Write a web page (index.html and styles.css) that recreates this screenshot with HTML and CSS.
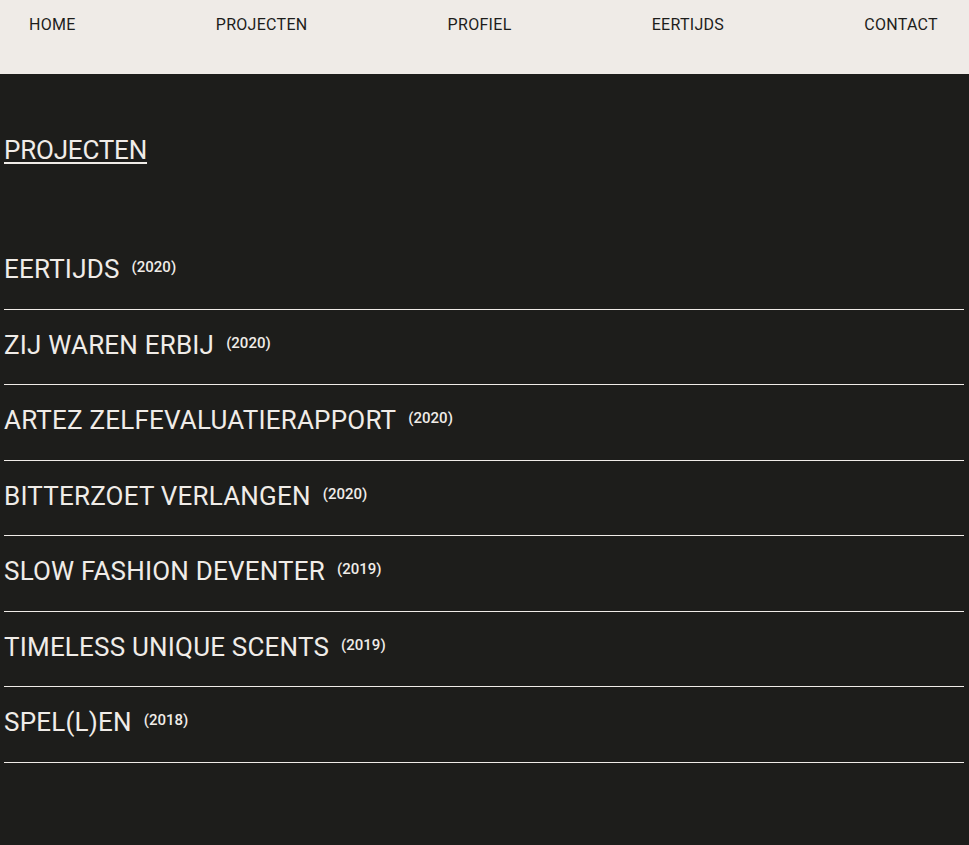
FILE: index.html
```html
<!DOCTYPE html>
<html lang="nl">
<head>
<meta charset="utf-8">
<title>Projecten</title>
<link rel="stylesheet" href="styles.css">
</head>
<body>
<header class="site-header">
  <nav class="nav">
    <a href="#">HOME</a>
    <a href="#">PROJECTEN</a>
    <a href="#">PROFIEL</a>
    <a href="#">EERTIJDS</a>
    <a href="#">CONTACT</a>
  </nav>
</header>
<main class="content">
  <h1 class="page-title"><a href="#">PROJECTEN</a></h1>
  <ul class="projects">
    <li class="project"><span class="name">EERTIJDS</span><span class="year">(2020)</span></li>
    <li class="project"><span class="name">ZIJ WAREN ERBIJ</span><span class="year">(2020)</span></li>
    <li class="project"><span class="name">ARTEZ ZELFEVALUATIERAPPORT</span><span class="year">(2020)</span></li>
    <li class="project"><span class="name">BITTERZOET VERLANGEN</span><span class="year">(2020)</span></li>
    <li class="project"><span class="name">SLOW FASHION DEVENTER</span><span class="year">(2019)</span></li>
    <li class="project"><span class="name">TIMELESS UNIQUE SCENTS</span><span class="year">(2019)</span></li>
    <li class="project"><span class="name">SPEL(L)EN</span><span class="year">(2018)</span></li>
  </ul>
</main>
</body>
</html>
```
FILE: styles.css
```css
html, body {
  margin: 0;
  padding: 0;
}
body {
  background: #1d1d1b;
  color: #f0ece8;
  font-family: Roboto, "Liberation Sans", sans-serif;
  min-height: 845px;
}
a {
  color: inherit;
  text-decoration: none;
}
.site-header {
  background: #efebe7;
  height: 74px;
}
.nav {
  display: flex;
  justify-content: space-between;
  padding: 15px 31px 0 29px;
  font-size: 16px;
  line-height: 20px;
  letter-spacing: 0.3px;
  color: #1d1d1b;
}
.content {
  padding: 0 5px 0 4px;
}
.page-title {
  margin: 0;
  padding-top: 61px;
  font-size: 26px;
  font-weight: 400;
  line-height: 31px;
  letter-spacing: -0.2px;
}
.page-title a {
  text-decoration: underline;
  text-decoration-thickness: 2px;
  text-underline-offset: 3px;
}
.projects {
  list-style: none;
  margin: 0;
  padding: 88px 0 0;
}
.project {
  display: flex;
  align-items: flex-start;
  gap: 12px;
  padding: 20px 0 23.5px;
  border-bottom: 1px solid #f0ece8;
  font-size: 26px;
  line-height: 31px;
}
.project:first-child {
  padding-top: 0;
}
.name {
  letter-spacing: 0.2px;
}
.year {
  font-size: 15px;
  font-weight: 500;
  line-height: 18px;
  margin-top: 4px;
}
```
